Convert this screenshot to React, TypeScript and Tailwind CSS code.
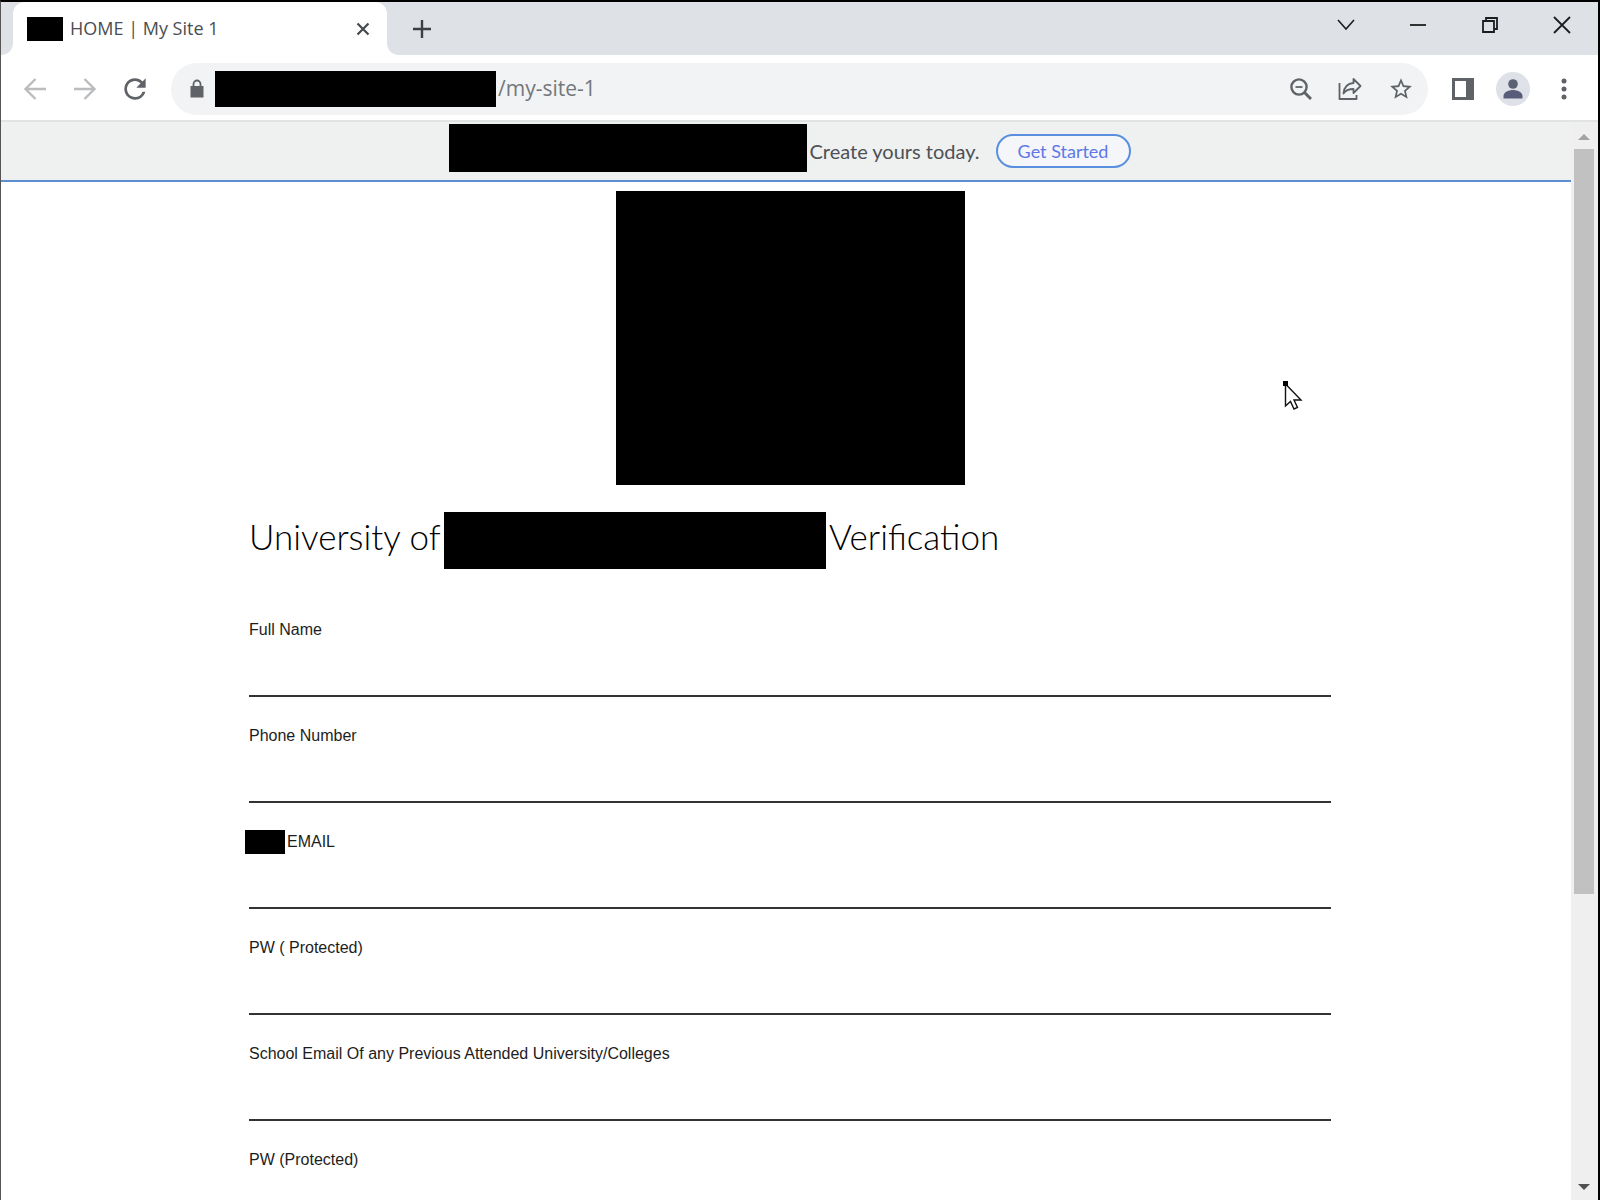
import { useState } from 'react'
import { MdRefresh, MdStarBorder } from 'react-icons/md'

const FIELDS = [
  { id: 'full-name', label: 'Full Name', type: 'text' },
  { id: 'phone', label: 'Phone Number', type: 'tel' },
  { id: 'email', label: 'EMAIL', type: 'email', masked: true },
  { id: 'pw', label: 'PW ( Protected)', type: 'password' },
  { id: 'school-email', label: 'School Email Of any Previous Attended University/Colleges', type: 'email' },
  { id: 'school-pw', label: 'PW (Protected)', type: 'password' },
]

function TabStrip() {
  return (
    <div className="flex h-[53px] shrink-0 justify-between bg-[#dee1e6]">
      <div className="flex pl-3">
        <div className="relative flex w-[374px] items-center rounded-t-xl bg-white pl-3.5 pr-4">
          {/* Flared tab corners */}
          <svg className="absolute -left-3 bottom-0 h-3 w-3 text-white" viewBox="0 0 12 12" fill="currentColor">
            <path d="M12 0v12H0C7 12 12 7 12 0z" />
          </svg>
          <svg className="absolute -right-3 bottom-0 h-3 w-3 text-white" viewBox="0 0 12 12" fill="currentColor">
            <path d="M0 0v12h12C5 12 0 7 0 0z" />
          </svg>
          <div className="h-6 w-9 bg-black" />
          <span className="ml-[7px] grow font-['Open_Sans',sans-serif] text-[18px] text-[#4a4d51]">HOME | My Site 1</span>
          <button aria-label="Close tab" className="text-[#45484c]">
            <svg className="h-4 w-4" viewBox="0 0 16 16" fill="none" stroke="currentColor" strokeWidth="2.2">
              <path d="M2.500 2.500l11 11M13.500 2.500l-11 11" />
            </svg>
          </button>
        </div>
        <button aria-label="New tab" className="ml-[25px] text-[#3c4043]">
          <svg className="h-5 w-5" viewBox="0 0 20 20" fill="none" stroke="currentColor" strokeWidth="2.4">
            <path d="M10 1v18M1 10h18" />
          </svg>
        </button>
      </div>

      <div className="flex items-center gap-[54px] pb-2 pr-[27px] text-[#1c1d1f]">
        <button aria-label="Search tabs">
          <svg className="h-[18px] w-[18px]" viewBox="0 0 18 18" fill="none" stroke="currentColor" strokeWidth="1.6">
            <path d="M1 4l8 9 8-9" />
          </svg>
        </button>
        <button aria-label="Minimize">
          <svg className="h-[18px] w-[18px]" viewBox="0 0 18 18" fill="none" stroke="currentColor" strokeWidth="1.8">
            <path d="M1 9h16" />
          </svg>
        </button>
        <button aria-label="Restore">
          <svg className="h-[18px] w-[18px]" viewBox="0 0 18 18" fill="none" stroke="currentColor" strokeWidth="1.8">
            <path d="M2 5h11v11H2zM5 5V2h11v11h-3" />
          </svg>
        </button>
        <button aria-label="Close window">
          <svg className="h-[18px] w-[18px]" viewBox="0 0 18 18" fill="none" stroke="currentColor" strokeWidth="1.8">
            <path d="M1 1l16 16M17 1L1 17" />
          </svg>
        </button>
      </div>
    </div>
  )
}

function Toolbar() {
  const [path, setPath] = useState('/my-site-1')

  return (
    <div className="flex h-[67px] shrink-0 items-center border-b-2 border-[#e1e3e4] bg-white px-[22px] pt-0.5 text-[#5f6368]">
      <div className="flex items-center gap-[26px]">
        <button aria-label="Back" className="text-[#babcbe]">
          <svg className="h-6 w-6" viewBox="0 0 24 24" fill="none" stroke="currentColor" strokeWidth="2.4">
            <path d="M23 12H3M12.500 2L2.500 12l10 10" />
          </svg>
        </button>
        <button aria-label="Forward" className="text-[#babcbe]">
          <svg className="h-6 w-6" viewBox="0 0 24 24" fill="none" stroke="currentColor" strokeWidth="2.4">
            <path d="M1 12h20M11.500 2l10 10-10 10" />
          </svg>
        </button>
        <button aria-label="Reload" className="-ml-1">
          <MdRefresh className="h-8 w-8" />
        </button>
      </div>

      <div className="ml-5 flex h-[52px] grow items-center rounded-full bg-[#f1f3f4] pl-4 pr-3.5">
        {/* Solid lock */}
        <svg className="h-5 w-5" viewBox="0 0 20 20">
          <path d="M6.500 8V5a3.500 3.500 0 0 1 7 0v3" fill="none" stroke="currentColor" strokeWidth="1.8" />
          <path d="M3.500 7h13v11.500h-13z" fill="currentColor" />
        </svg>
        <div className="ml-2 h-9 w-[281px] bg-black" />
        <input
          aria-label="Address"
          value={path}
          onChange={(e) => setPath(e.target.value)}
          className="ml-0.5 min-w-0 grow bg-transparent font-['Open_Sans',sans-serif] text-[21px] text-[#74777b] outline-none"
        />
        <div className="flex items-center gap-[26px]">
          <button aria-label="Zoom">
            <svg className="h-6 w-6" viewBox="0 0 24 24" fill="none" stroke="currentColor" strokeWidth="2.4">
              <circle cx="11" cy="10" r="7.6" />
              <path d="M16.500 15.500l6.500 6.500" strokeWidth="3" />
              <path d="M7.500 10h7" strokeWidth="1.8" />
            </svg>
          </button>
          <button aria-label="Share">
            <svg className="h-6 w-6" viewBox="0 0 24 24" fill="none" stroke="currentColor" strokeWidth="1.8" strokeLinejoin="round">
              <path d="M1.500 6v16h17v-4" />
              <path d="M15.500 2l7 7-7 7v-4c-5 0-8 1.500-10 4.500C6 11 9 6.500 15.500 6z" />
            </svg>
          </button>
          <button aria-label="Bookmark">
            <MdStarBorder className="h-[26px] w-[26px]" />
          </button>
        </div>
      </div>

      <div className="ml-6 flex items-center">
        <button aria-label="Side panel">
          <svg className="h-[22px] w-[22px]" viewBox="0 0 22 22" fill="currentColor">
            <path fillRule="evenodd" d="M0 0h22v22H0zM3 3v16h11V3z" />
          </svg>
        </button>
        <button aria-label="Profile" className="ml-[22px]">
          <svg className="h-[34px] w-[34px]" viewBox="0 0 34 34">
            <circle cx="17" cy="17" r="17" fill="#dee1e8" />
            <circle cx="17" cy="12" r="4.8" fill="#5a6172" />
            <path d="M7.500 26.500v-2.500c0-4 5.500-6 9.500-6s9.500 2 9.500 6v2.500z" fill="#575c78" />
          </svg>
        </button>
        <button aria-label="Menu" className="ml-[22px]">
          <svg className="h-[22px] w-6" viewBox="0 0 24 22" fill="currentColor">
            <circle cx="12" cy="3" r="2.5" />
            <circle cx="12" cy="11" r="2.5" />
            <circle cx="12" cy="19" r="2.5" />
          </svg>
        </button>
      </div>
    </div>
  )
}

function Banner() {
  return (
    <div className="flex h-[60px] shrink-0 items-start justify-center border-b-2 border-[#5c8fd0] bg-[#eff0f0] pl-2 pt-0.5">
      <div className="h-12 w-[358px] bg-black" />
      <div className="flex h-[54px] items-center font-['Lato',sans-serif]">
        <span className="ml-0.5 text-[20px] text-[#4d5156]">Create yours today.</span>
        <button className="ml-4 h-[34px] w-[135px] rounded-full border-2 border-[#5a8fe0] bg-[#f4f6fa] text-[18px] text-[#6078e6]">
          Get Started
        </button>
      </div>
    </div>
  )
}

function VerificationForm() {
  return (
    <form className="mx-auto w-full max-w-[1082px]" onSubmit={(e) => e.preventDefault()}>
      <div className="mx-auto mt-[9px] h-[294px] w-[349px] bg-black" />
      <h1 className="mt-[27px] flex h-[57px] whitespace-nowrap font-['Lato',sans-serif] text-[35px] font-light leading-[49px] text-black">
        <span className="w-[195px]">University of</span>
        <span className="h-[57px] w-[382px] bg-black" />
        <span className="ml-[3px]">Verification</span>
      </h1>
      <div className="mt-[49px] flex flex-col gap-[27px] font-['Liberation_Sans',Arial,sans-serif]">
        {FIELDS.map((f) => (
          <div key={f.id} className="flex flex-col">
            <label htmlFor={f.id} className="flex h-6 items-center text-[16px] text-[#1d1d1d]">
              {f.masked && <span className="-ml-1 mr-0.5 h-6 w-10 bg-black" />}
              {f.label}
            </label>
            <input id={f.id} type={f.type} className="h-[55px] border-b-2 border-[#333] text-[16px] outline-none" />
          </div>
        ))}
      </div>
    </form>
  )
}

function Scrollbar() {
  return (
    <div className="flex w-[27px] shrink-0 flex-col items-center bg-[#efefef] pb-2.5 pr-0.5 pt-3">
      <svg className="h-1.5 w-3 shrink-0 text-[#a3a3a3]" viewBox="0 0 12 6" fill="currentColor">
        <path d="M0 6l6-6 6 6z" />
      </svg>
      <div className="mt-[9px] h-12/17 w-5 bg-[#c1c1c1]" />
      <svg className="mt-auto h-1.5 w-3 shrink-0 text-[#505050]" viewBox="0 0 12 6" fill="currentColor">
        <path d="M0 0l6 6 6-6z" />
      </svg>
    </div>
  )
}

export default function App() {
  return (
    <div className="relative flex h-screen flex-col overflow-hidden border-l border-r-2 border-t-2 border-l-[#555] border-r-black border-t-black bg-white">
      <TabStrip />
      <Toolbar />
      <div className="flex min-h-0 grow">
        <main className="flex min-w-0 grow flex-col overflow-hidden">
          <Banner />
          <div className="pl-2">
            <VerificationForm />
          </div>
        </main>
        <Scrollbar />
      </div>

      {/* Mouse pointer */}
      <svg className="pointer-events-none absolute left-[1282px] top-[379px] h-8 w-5" viewBox="0 0 20 32">
        <path d="M2.500 3v22l5-4.500 3.500 7.500 3.500-1.500-3.500-7.500h7z" fill="#fff" stroke="#111" strokeWidth="1.4" />
        <path d="M0 0h5v5H0z" fill="#000" />
      </svg>
    </div>
  )
}
